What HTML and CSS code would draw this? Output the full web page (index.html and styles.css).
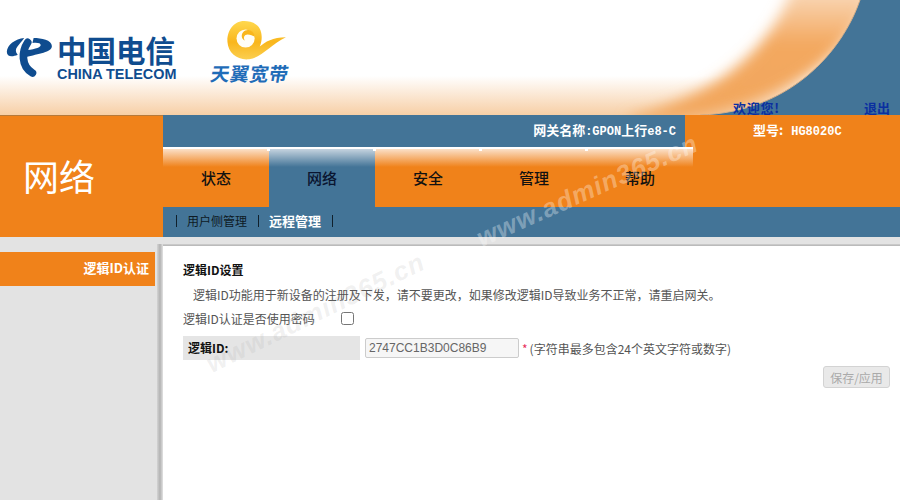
FILE: index.html
```html
<!DOCTYPE html>
<html lang="zh-CN">
<head>
<meta charset="utf-8">
<title>网络 - 逻辑ID认证</title>
<link rel="stylesheet" href="styles.css">
</head>
<body>
<div class="page">
  <header class="banner">
    <svg class="banner-art" viewBox="0 0 900 115" preserveAspectRatio="none" aria-hidden="true">
      <defs>
        <linearGradient id="floor" x1="0" y1="0" x2="0" y2="1">
          <stop offset="0" stop-color="#ffffff"/>
          <stop offset=".66" stop-color="#ffffff"/>
          <stop offset="1" stop-color="#f7cfa6"/>
        </linearGradient>
        <linearGradient id="sweep" x1="0" y1="0" x2="0" y2="1">
          <stop offset="0" stop-color="#fbe3cc"/>
          <stop offset=".45" stop-color="#f3a85f"/>
          <stop offset="1" stop-color="#f2a65c"/>
        </linearGradient>
        <filter id="soft" x="-20%" y="-20%" width="140%" height="140%">
          <feGaussianBlur stdDeviation="7"/>
        </filter>
      </defs>
      <rect width="900" height="115" fill="url(#floor)"/>
      <path d="M795 -20L880 -20C850 60 780 118 640 122L625 118C720 96 775 45 795 -20Z" fill="url(#sweep)" filter="url(#soft)"/>
      <path d="M860 0C842 52 790 112 700 115L900 115L900 0Z" fill="#437497"/>
      <path d="M860 0C842 52 790 112 700 115" fill="none" stroke="#d9b088" stroke-width="1"/>
    </svg>
    <div class="brand">
      <svg class="brand-mark" viewBox="0 0 180 180" aria-hidden="true">
        <path d="M72 27C42 30 14 50 13 74C13 92 32 92 50 84C42 76 42 66 48 58C54 48 64 38 72 27Z" fill="#0f4c8f"/>
        <path d="M84 42C64 72 60 122 100 146" fill="none" stroke="#0f4c8f" stroke-width="26" stroke-linecap="round"/>
        <path d="M104 27C130 27 166 34 166 54C166 76 120 80 78 92L74 70C100 66 126 62 128 52C129 44 116 42 100 44Z" fill="#0f4c8f"/>
      </svg>
      <div class="brand-name">
        <span class="brand-cn">中国电信</span>
        <span class="brand-en">CHINA TELECOM</span>
      </div>
      <div class="broadband">
        <svg class="swirl" viewBox="60 10 190 125" aria-hidden="true">
          <defs>
            <linearGradient id="gold" x1="0" y1="0" x2="0" y2="1">
              <stop offset="0" stop-color="#ffd84e"/>
              <stop offset=".55" stop-color="#f9b61c"/>
              <stop offset="1" stop-color="#fbcf50"/>
            </linearGradient>
          </defs>
          <path d="M120 16C85 16 68 50 70 78C72 112 100 134 135 130C172 124 200 85 244 64C205 64 182 78 166 92C176 70 174 40 156 27C146 19 132 16 120 16Z" fill="url(#gold)"/>
          <circle cx="124" cy="68" r="27" fill="#fffdf5"/>
          <path d="M151 62C150 44 128 36 116 50C110 58 112 70 122 74C116 66 120 56 130 56C138 56 146 60 151 62Z" fill="#f9b61c"/>
        </svg>
        <span class="broadband-name">天翼宽带</span>
      </div>
    </div>
    <div class="account">
      <span class="welcome">欢迎您!</span>
      <a class="logout">退出</a>
    </div>
  </header>

  <section class="masthead">
    <div class="section-title">网络</div>
    <div class="nav">
      <div class="info">
        <div class="gateway">网关名称<span class="ascii">:GPON</span>上行<span class="ascii">e8-C</span></div>
        <div class="model">型号: <span class="ascii ascii-model">HG8020C</span></div>
      </div>
      <div class="tabs">
        <a class="tab">状态</a>
        <a class="tab tab-active">网络</a>
        <a class="tab">安全</a>
        <a class="tab">管理</a>
        <a class="tab">帮助</a>
      </div>
      <div class="subnav">
        <span class="sep"></span>
        <a class="sub">用户侧管理</a>
        <span class="sep"></span>
        <a class="sub sub-active">远程管理</a>
        <span class="sep"></span>
      </div>
    </div>
  </section>

  <main class="main">
    <aside class="side">
      <a class="side-item">逻辑ID认证</a>
    </aside>
    <div class="content">
      <h2 class="heading">逻辑ID设置</h2>
      <p class="intro">逻辑ID功能用于新设备的注册及下发，请不要更改，如果修改逻辑ID导致业务不正常，请重启网关。</p>
      <div class="check-row">
        <label class="check-label" for="usePwd">逻辑ID认证是否使用密码</label>
        <input class="check" id="usePwd" type="checkbox">
      </div>
      <div class="field">
        <label class="field-label" for="logicId">逻辑ID:</label>
        <input class="field-input" id="logicId" type="text" value="2747CC1B3D0C86B9" disabled>
        <span class="req">*</span>
        <span class="hint">(字符串最多包含24个英文字符或数字)</span>
      </div>
      <div class="actions">
        <button class="apply" type="button" disabled>保存/应用</button>
      </div>
    </div>
  </main>

  <div class="stamp stamp-nav">www.admin365.cn</div>
  <div class="stamp stamp-body">www.admin365.cn</div>
</div>
</body>
</html>
```

FILE: styles.css
```css
* { box-sizing: border-box; }

html, body {
  margin: 0;
  height: 100%;
}

body {
  font-family: "Noto Sans CJK SC", "Liberation Sans", sans-serif;
  font-size: 12px;
  color: #555;
  background: #e3e3e3;
  overflow: hidden;
}

.page {
  position: relative;
  width: 900px;
  height: 500px;
  display: flex;
  flex-direction: column;
  overflow: hidden;
}

/* banner */
.banner {
  position: relative;
  flex: 0 0 115px;
  background: #fff;
}

.banner-art {
  position: absolute;
  inset: 0;
  width: 100%;
  height: 100%;
  display: block;
}

.brand {
  position: relative;
  display: flex;
  align-items: flex-start;
  padding: 32px 0 0 3px;
}

.brand-mark {
  width: 53px;
  height: 53px;
  margin-top: -2px;
}

.brand-name {
  display: flex;
  flex-direction: column;
  margin-left: 1px;
  color: #0f4c8f;
  width: 120px;
}

.brand-cn {
  font-size: 29.5px;
  font-weight: 700;
  line-height: 34px;
  white-space: nowrap;
}

.brand-en {
  font-family: "Liberation Sans", sans-serif;
  font-size: 14.4px;
  font-weight: 700;
  line-height: 16px;
  white-space: nowrap;
}

.broadband {
  display: flex;
  flex-direction: column;
  align-items: center;
  width: 80px;
  margin: -13px 0 0 33px;
}

.swirl {
  width: 64px;
  height: 42px;
  margin-left: 11px;
  flex: none;
}

.broadband-name {
  color: #1f6cb8;
  font-size: 19px;
  font-weight: 700;
  line-height: 24px;
  letter-spacing: .5px;
  white-space: nowrap;
  transform: skewX(-10deg);
}

.account {
  position: absolute;
  right: 10px;
  bottom: -1px;
  display: flex;
  gap: 84px;
  color: #0b2fa0;
  font-size: 13px;
  font-weight: 700;
  line-height: 16px;
}

.welcome {
  letter-spacing: .8px;
}

/* section title and navigation */
.masthead {
  flex: 0 0 121px;
  display: grid;
  grid-template-columns: 163px 1fr;
}

.section-title {
  background: #f0821a;
  color: #fff;
  font-size: 36px;
  line-height: 118px;
  padding-left: 23px;
  border-top: 1px solid #b57a3c;
}

.nav {
  display: flex;
  flex-direction: column;
  min-width: 0;
}

.info {
  flex: 0 0 31px;
  display: flex;
  color: #fff;
  font-weight: 700;
  font-size: 13px;
  line-height: 29px;
  background: #437497;
}

.gateway {
  flex: 1;
  text-align: right;
  padding-right: 9px;
}

.model {
  flex: 0 0 215px;
  background: #f0821a;
  padding-left: 68px;
}

.ascii {
  font-family: "Liberation Mono", monospace;
  font-size: 12px;
}

.ascii-model {
  margin-left: 5px;
}

.tabs {
  flex: 0 0 60px;
  display: flex;
  background: #f0821a;
}

.tab {
  position: relative;
  flex: 0 0 106px;
  padding-top: 19px;
  text-align: center;
  color: #111;
  font-size: 15px;
  font-weight: 500;
  line-height: 20px;
  border-top: 2px solid #fff;
  background: linear-gradient(#fbe0c8, #f0821a 18px);
}

.tab + .tab::before {
  content: "";
  position: absolute;
  left: -2px;
  top: 0;
  width: 3px;
  height: 2px;
  background: #fff;
}

.tab-active {
  background: linear-gradient(#c5d3df, #437497 18px);
  color: #0a1530;
}

.subnav {
  flex: 1;
  display: flex;
  align-items: center;
  padding: 0 0 2px 13px;
  background: #437497;
}

.sep {
  width: 1px;
  height: 12px;
  background: #10202c;
}

.sub {
  margin: 0 11px 0 10px;
  color: #0e1a24;
  font-size: 12px;
  line-height: 28px;
}

.sub-active {
  margin-left: 10px;
  color: #fff;
  font-weight: 700;
  font-size: 13px;
}

/* page body */
.main {
  flex: 1;
  display: flex;
  gap: 2px;
  min-height: 0;
}

.side {
  flex: 0 0 155px;
  padding-top: 15px;
}

.side-item {
  display: block;
  height: 34px;
  padding-right: 6px;
  background: #f0821a;
  color: #fff;
  text-align: right;
  font-size: 13px;
  font-weight: 700;
  line-height: 32px;
}

/* the bevel along the panel's top and left edges is painted as background layers */
.content {
  flex: 1;
  margin-top: 7px;
  padding: 17px 10px 0 26px;
  background:
    linear-gradient(90deg, #d4d4d4, #b2b2b2 3px, #e2e2e2 6px) left top / 6px 100% no-repeat,
    linear-gradient(#d0d0d0, #b4b4b4) left top / 100% 2px no-repeat,
    #fff;
}

.heading {
  margin: 0;
  color: #111;
  font-size: 12px;
  font-weight: 700;
  line-height: 18px;
}

.intro {
  margin: 7px 0 0;
  padding-left: 10px;
  line-height: 18px;
}

.check-row {
  display: flex;
  align-items: center;
  margin-top: 5px;
  height: 18px;
}

.check {
  width: 13px;
  height: 13px;
  margin: 0 0 0 26px;
}

.field {
  display: flex;
  align-items: center;
  height: 24px;
  margin-top: 9px;
}

.field-label {
  flex: 0 0 177px;
  height: 24px;
  padding-left: 5px;
  background: #e5e5e5;
  color: #111;
  font-weight: 700;
  line-height: 24px;
}

.field-input {
  width: 154px;
  height: 20px;
  margin-left: 5px;
  padding: 0 3px;
  border: 1px solid #ccc;
  border-radius: 2px;
  background: #f6f6f6;
  color: #666;
  font-family: "Liberation Sans", sans-serif;
  font-size: 12px;
}

.req {
  margin-left: 3px;
  color: #e8305c;
}

.hint {
  margin-left: 2px;
}

.actions {
  display: flex;
  justify-content: flex-end;
  margin-top: 6px;
}

.apply {
  width: 67px;
  height: 22px;
  padding: 0;
  border: 1px solid #d3d3d3;
  border-radius: 3px;
  background: #e9e9e9;
  color: #aaa;
  font-family: inherit;
  font-size: 12px;
}

/* translucent site stamps laid over the page */
.stamp {
  position: absolute;
  font-family: "Liberation Sans", sans-serif;
  font-size: 26px;
  font-style: italic;
  font-weight: 700;
  letter-spacing: 1px;
  white-space: nowrap;
  transform-origin: left center;
  pointer-events: none;
}

.stamp-nav {
  left: 478px;
  top: 224px;
  color: rgba(255, 255, 255, .32);
  transform: rotate(-24deg);
}

.stamp-body {
  left: 208px;
  top: 350px;
  color: rgba(150, 150, 150, .14);
  transform: rotate(-26deg);
}
```
